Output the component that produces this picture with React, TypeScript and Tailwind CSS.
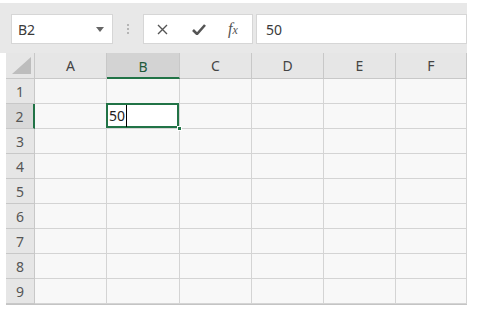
import * as React from "react";

const COLS = ["A", "B", "C", "D", "E", "F"];
const ROWS = [1, 2, 3, 4, 5, 6, 7, 8, 9];

export default function App() {
  return (
    <div className="h-[311px] w-[477px] overflow-hidden bg-white pt-[3px] font-['Noto_Sans',sans-serif] text-[#444]">
      {/* formula bar */}
      <div className="flex h-[50px] w-[467px] items-start bg-[#e8e8e8] pl-[11px] pt-[11px]">
        <div className="flex h-[30px] w-[102px] items-center justify-between border border-[#d6d6d6] bg-white pl-[6px] pr-[8px]">
          <span className="text-[14px] text-[#3a3a3a]">B2</span>
          <svg width="8" height="5" viewBox="0 0 8 5">
            <path d="M0 0h8L4 5z" fill="#666" />
          </svg>
        </div>
        <div className="ml-[14px] mt-[10px] flex flex-col gap-[2px]">
          <span className="h-[2px] w-[2px] bg-[#b5b5b5]" />
          <span className="h-[2px] w-[2px] bg-[#b5b5b5]" />
          <span className="h-[2px] w-[2px] bg-[#b5b5b5]" />
        </div>
        <div className="ml-[14px] flex h-[30px] w-[110px] items-center border border-[#d6d6d6] bg-white">
          <svg className="ml-[13px]" width="11" height="11" viewBox="0 0 11 11">
            <path d="M1 1l9 9M10 1l-9 9" stroke="#555" strokeWidth="1.4" />
          </svg>
          <svg className="ml-[24px]" width="14" height="11" viewBox="0 0 14 11">
            <path d="M1 6l4 4 8-9" stroke="#555" strokeWidth="2.6" fill="none" />
          </svg>
          <span className="ml-[22px] font-['Liberation_Serif',serif] text-[16px] italic text-[#555]">
            f<span className="text-[12px]">x</span>
          </span>
        </div>
        <div className="ml-[3px] flex h-[30px] flex-1 items-center border border-[#d6d6d6] bg-white pl-[9px]">
          <span className="text-[14px] text-[#3a3a3a]">50</span>
        </div>
      </div>

      {/* sheet */}
      <div className="ml-[6px] grid w-[461px] grid-cols-[29px_72px_73px_72px_72px_72px_71px] grid-rows-[26px_repeat(9,25px)] border-r border-b border-[#c4c4c4] bg-[#f8f8f8]">
        <div className="relative border-r border-b border-[#c8c8c8] bg-[#e6e6e6]">
          <svg className="absolute right-[3px] bottom-[4px]" width="19" height="17" viewBox="0 0 19 17">
            <path d="M19 0V17H0z" fill="#bdbdbd" />
          </svg>
        </div>
        {COLS.map((c) => (
          <div
            key={c}
            className={
              c === "B"
                ? "flex items-center justify-center border-r border-b-2 border-r-[#c8c8c8] border-b-[#217346] bg-[#d3d3d3] pt-[2px] text-[14px] text-[#1f5a3b]"
                : "flex items-center justify-center border-r border-b border-[#c8c8c8] bg-[#e6e6e6] text-[14px]"
            }
          >
            {c}
          </div>
        ))}
        {ROWS.map((r) => (
          <React.Fragment key={r}>
            <div
              className={
                r === 2
                  ? "flex items-center justify-center border-r-2 border-b border-r-[#217346] border-b-[#c8c8c8] bg-[#d9d9d9] text-[14px] text-[#555]"
                  : "flex items-center justify-center border-r border-b border-[#c8c8c8] bg-[#e6e6e6] text-[14px] text-[#555]"
              }
            >
              {r}
            </div>
            {COLS.map((c) =>
              r === 2 && c === "B" ? (
                <div key={c} className="relative border-r border-b border-[#d4d4d4] bg-white">
                  <div className="absolute -top-[1px] -left-[1px] right-0 bottom-0 flex items-center border-2 border-[#217346] pl-[1px]">
                    <span className="text-[14px] leading-none text-[#222]">50</span>
                    <span className="ml-[1px] h-[22px] w-[1px] bg-black" />
                  </div>
                  <span className="absolute -right-[3px] -bottom-[3px] h-[5px] w-[5px] border border-white bg-[#217346]" />
                </div>
              ) : (
                <div key={c} className="border-r border-b border-[#d4d4d4]" />
              )
            )}
          </React.Fragment>
        ))}
      </div>
    </div>
  );
}
